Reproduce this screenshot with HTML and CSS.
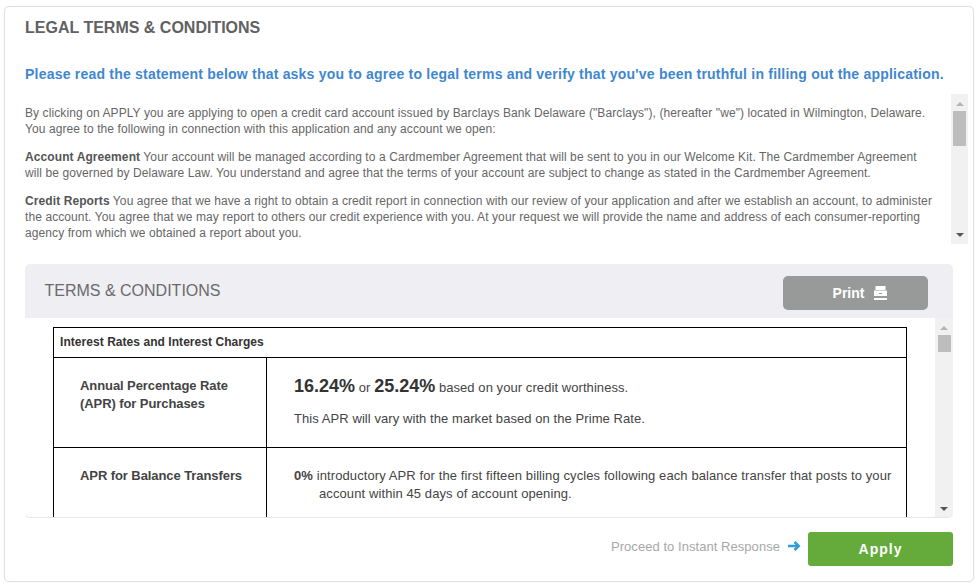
FILE: index.html
```html
<!DOCTYPE html>
<html lang="en">
<head>
<meta charset="utf-8">
<title>Legal Terms &amp; Conditions</title>
<link rel="stylesheet" href="styles.css">
</head>
<body>
<main class="card">
  <h1 class="title">LEGAL TERMS &amp; CONDITIONS</h1>
  <p class="lead">Please read the statement below that asks you to agree to legal terms and verify that you've been truthful in filling out the application.</p>
  <section class="legal">
    <div class="legal-text">
      <p>By clicking on APPLY you are applying to open a credit card account issued by Barclays Bank Delaware ("Barclays"), (hereafter "we") located in Wilmington, Delaware. You agree to the following in connection with this application and any account we open:</p>
      <p><b>Account Agreement</b> Your account will be managed according to a Cardmember Agreement that will be sent to you in our Welcome Kit. The Cardmember Agreement will be governed by Delaware Law. You understand and agree that the terms of your account are subject to change as stated in the Cardmember Agreement.</p>
      <p><b>Credit Reports</b> You agree that we have a right to obtain a credit report in connection with our review of your application and after we establish an account, to administer the account. You agree that we may report to others our credit experience with you. At your request we will provide the name and address of each consumer-reporting agency from which we obtained a report about you.</p>
    </div>
    <div class="scrollbar scrollbar-legal">
      <svg class="arrow" width="10" height="5" viewBox="0 0 10 5"><path d="M1 5 5 1l4 4z" fill="#b4b4b4"/></svg>
      <div class="thumb thumb-legal"></div>
      <svg class="arrow arrow-down" width="10" height="5" viewBox="0 0 10 5"><path d="M1 0h8L5 4z" fill="#555"/></svg>
    </div>
  </section>
  <section class="terms">
    <header class="terms-head">
      <h2 class="terms-title">TERMS &amp; CONDITIONS</h2>
      <button class="print" type="button">Print
        <svg width="13" height="14" viewBox="0 0 13 14"><path d="M1.500 0h10v4h-10zM0 4.500h13V10H0zM0 12h13v2H0z" fill="#fff"/><path d="M5 7h3v1H5z" fill="#979a99"/></svg>
      </button>
    </header>
    <div class="terms-body">
      <div class="terms-scroll">
        <table class="rates">
          <colgroup><col class="col-label"><col class="col-value"></colgroup>
          <tr><th colspan="2" class="rates-head"><span class="rates-head-text">Interest Rates and Interest Charges</span></th></tr>
          <tr class="row-apr">
            <th class="label">Annual Percentage Rate (APR) for Purchases</th>
            <td class="value">
              <div class="rate-line"><b class="big">16.24%</b> or <b class="big">25.24%</b> based on your credit worthiness.</div>
              <div class="rate-note">This APR will vary with the market based on the Prime Rate.</div>
            </td>
          </tr>
          <tr class="row-bt">
            <th class="label">APR for Balance Transfers</th>
            <td class="value"><div class="bt"><b>0%</b> introductory APR for the first fifteen billing cycles following each balance transfer that posts to your account within 45 days of account opening.</div></td>
          </tr>
        </table>
      </div>
      <div class="scrollbar scrollbar-terms">
        <svg class="arrow" width="10" height="5" viewBox="0 0 10 5"><path d="M1 5 5 1l4 4z" fill="#b4b4b4"/></svg>
        <div class="thumb thumb-terms"></div>
        <svg class="arrow arrow-down" width="10" height="5" viewBox="0 0 10 5"><path d="M1 0h8L5 4z" fill="#555"/></svg>
      </div>
    </div>
  </section>
  <footer class="actions">
    <span class="proceed">Proceed to Instant Response</span>
    <svg class="proceed-arrow" width="14" height="12" viewBox="0 0 14 12"><path d="M1 6h10M7.500 1.800 11.700 6l-4.200 4.200" fill="none" stroke="#2f9fd8" stroke-width="2.600"/></svg>
    <button class="apply" type="button">Apply</button>
  </footer>
</main>
</body>
</html>
```
FILE: styles.css
```css
* { box-sizing: border-box; }
html, body { margin: 0; height: 586px; overflow: hidden; background: #fff; }
body { padding: 6px 6px 4px 4px; font-family: "Liberation Sans", Arial, sans-serif; color: #666; }
.card {
  height: 576px;
  border: 1px solid #e1e1e1;
  border-radius: 5px;
  box-shadow: 0 0 1px #ddd;
  padding: 0 5px 0 20px;
  display: flex;
  flex-direction: column;
}
.title { margin: 12px 0 0; font-size: 16px; line-height: 18px; font-weight: bold; color: #616161; }
.lead { margin: 28px 0 0; font-size: 14px; line-height: 18px; font-weight: bold; color: #3f87cf; letter-spacing: .213px; white-space: nowrap; }
.legal { margin-top: 11px; height: 150px; display: flex; }
.legal-text { width: 926px; height: 150px; overflow: hidden; padding: 11px 16px 0 0; font-size: 12px; line-height: 16px; letter-spacing: .093px; color: #666; }
.legal-text p { margin: 0 0 12px; }
.legal-text b { color: #555; }
.scrollbar { display: flex; flex-direction: column; align-items: center; background: #f1f1f1; flex: none; }
.scrollbar-legal { width: 17px; height: 150px; }
.scrollbar-terms { width: 18px; height: 200px; border-bottom-right-radius: 5px; }
.arrow { display: block; margin-top: 7px; flex: none; }
.arrow-down { margin-top: auto; margin-bottom: 6px; }
.thumb { background: #bdbdbd; width: 13px; flex: none; margin-top: 5px; }
.thumb-legal { height: 35px; }
.thumb-terms { height: 17px; }
.terms { margin-top: 20px; width: 928px; height: 254px; flex: none; border-radius: 5px; background: #efeef2; border-bottom: 1px solid #e6e6e6; display: flex; flex-direction: column; }
.terms-head { height: 54px; flex: none; display: flex; align-items: flex-start; justify-content: space-between; padding: 12px 25px 0 19.500px; }
.terms-title { margin: 6px 0 0; font-size: 16px; line-height: 18px; font-weight: normal; color: #6a6a6a; }
.print { width: 145px; height: 34px; border: 0; border-radius: 5px; background: #979a99; color: #fff; font: bold 14px "Liberation Sans", sans-serif; display: flex; align-items: center; justify-content: center; gap: 10px; padding: 0 0 0 9px; }
.terms-body { flex: 1; min-height: 0; display: flex; background: #fff; border-radius: 0 0 5px 5px; overflow: hidden; }
.terms-scroll { flex: 1; overflow: hidden; padding: 9px 0 0 28px; }
.rates { border-collapse: collapse; table-layout: fixed; width: 854px; color: #333; }
.col-label { width: 213px; }
.rates th, .rates td { border: 1px solid #000; padding: 0; text-align: left; vertical-align: top; }
.rates .rates-head { height: 30px; font-size: 12px; letter-spacing: .05px; font-weight: bold; padding: 0 0 2px 6px; vertical-align: middle; color: #333; }
.row-apr { height: 90px; }
.row-bt { height: 90px; }
.rates .label { padding: 19px 20px 0 26px; font-size: 13px; line-height: 18px; letter-spacing: -.08px; font-weight: bold; color: #444; }
.rates .value { padding: 0 14px 0 27px; font-size: 13px; letter-spacing: .07px; color: #444; }
.rate-line { margin-top: 16px; line-height: 24px; }
.big { font-size: 18px; letter-spacing: 0; color: #333; }
.rate-note { margin-top: 11px; line-height: 16px; }
.bt { margin-top: 19px; line-height: 18px; letter-spacing: .1px; padding-left: 25px; text-indent: -25px; }
.actions { flex: 1; display: flex; align-items: center; justify-content: flex-end; padding: 0 15px 2px 0; }
.proceed { font-size: 13px; letter-spacing: .05px; color: #a7a7a7; margin-bottom: 5px; }
.proceed-arrow { margin: 0 7px 5px; }
.apply { width: 145px; height: 34px; border: 0; border-radius: 3px; background: #64ab3c; color: #fff; font: bold 14px "Liberation Sans", sans-serif; letter-spacing: 1px; }
```
